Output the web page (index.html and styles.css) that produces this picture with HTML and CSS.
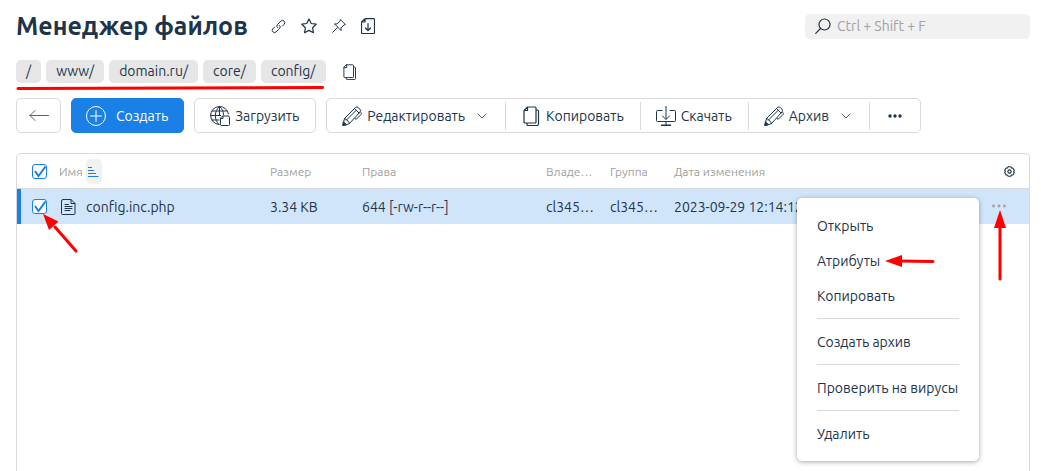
FILE: index.html
```
<!DOCTYPE html>
<html lang="ru">
<head>
<meta charset="utf-8">
<title>Менеджер файлов</title>
<meta name="viewport" content="width=device-width, initial-scale=1">
<link rel="stylesheet" href="styles.css">
</head>
<body>
<svg class="sprite" aria-hidden="true">
  <symbol id="pencil" viewBox="0 0 20 20"><path d="M1 19l1.500-6.500L13.500 1.500q1.500-1.200 3 .2l1.300 1.300q1.500 1.500.2 3L7.500 17.500zM2.500 12.500q1.700 0 2 1.600 1.700.3 1.700 1.600 1.300.3 1.300 1.800M4.500 14L14.500 4M19 6.500q.7 1 0 2l-4.500 4.500q-1.200.8-1.500-.5M12.500 2.500l4.500 4.500"/><path d="M.8 19.200l.6-3.500 2.900 2.900z" fill="currentColor"/></symbol>
  <symbol id="chevron" viewBox="0 0 10 6"><path d="M1 1l4 4 4-4"/></symbol>
  <symbol id="copy" viewBox="0 0 16 20"><path d="M4.500 1H12q1 0 1 1v14q0 1-1 1H2q-1 0-1-1V4.500zM4.500 1v3.500H1M13 4h1.500q1 0 1 1v13q0 1.500-1.500 1.500H5q-1 0-1-1V17"/></symbol>
</svg>

<header class="header">
  <h1 class="title">Менеджер файлов</h1>
  <div class="title-actions">
    <button class="icon-button" aria-label="Скопировать ссылку"><svg class="icon thin" width="15" height="15" viewBox="0 0 15 15"><path d="M6.800 8.800Q4.800 7.200 6.300 5.700L10 2q1.500-1.500 3 0 1.700 1.700.2 3.200L11.500 7M8.200 6.200q2 1.600.5 3.100L5 13q-1.500 1.500-3 0-1.700-1.700-.2-3.200L3.500 8"/></svg></button>
    <button class="icon-button" aria-label="В избранное"><svg class="icon" width="16" height="16" viewBox="0 0 16 16"><path d="M8 1l2.200 4.500 5 .7-3.600 3.500.8 5L8 12.400l-4.400 2.300.8-5L.8 6.200l5-.7z"/></svg></button>
    <button class="icon-button" aria-label="Закрепить"><svg class="icon thin" width="14" height="14" viewBox="0 0 14 14"><path d="M8.500.7l4.800 4.800-1.300.4-3 3 .1 2.600-6.600-6.600 2.600.1 3-3zM5.500 8.500L.7 13.300"/></svg></button>
    <button class="icon-button" aria-label="Скачать"><svg class="icon" width="14" height="16" viewBox="0 0 14 16"><path d="M4 .6h8.500q1 0 1 1v12.900q0 1-1 1h-11q-1 0-1-1V4zM4 .6V4H.5M7 5.500v7M4.500 10L7 12.500 9.500 10"/></svg></button>
  </div>
  <label class="search">
    <svg class="icon" width="16" height="16" viewBox="0 0 16 16"><circle cx="9.500" cy="6.500" r="5.500"/><path d="M5.500 10.500L.7 15.300"/></svg>
    <input class="search-input" type="text" aria-label="Поиск" placeholder="Ctrl + Shift + F">
  </label>
</header>

<nav class="path" aria-label="Путь">
  <div class="crumbs">
    <a class="crumb" href="#">/</a>
    <a class="crumb" href="#">www/</a>
    <a class="crumb" href="#">domain.ru/</a>
    <a class="crumb" href="#">core/</a>
    <a class="crumb" href="#">config/</a>
    <svg class="underline" viewBox="0 0 312 4" preserveAspectRatio="none" aria-hidden="true"><path d="M2 2.500L309 1.500"/></svg>
  </div>
  <button class="icon-button" aria-label="Скопировать путь"><svg class="icon" width="13" height="16"><use href="#copy"/></svg></button>
</nav>

<div class="toolbar">
  <button class="button back" aria-label="Назад"><svg class="icon soft" width="20" height="13" viewBox="0 0 20 13"><path d="M19.500 6.500H.8M6 1.500l-5 5 5 5"/></svg></button>
  <button class="button primary"><svg class="icon thin" width="20" height="20" viewBox="0 0 20 20"><circle cx="10" cy="10" r="9.500"/><path d="M10 4.500v11M4.500 10h11"/></svg>Создать</button>
  <button class="button upload"><svg class="icon thin" width="20" height="20" viewBox="0 0 20 20"><path d="M9 18.500A9 9 0 1 1 18.500 8M9.500.5v9M9 18.500C4 14 4 5 9.500.5 12.500 3 13.500 6 13.500 8.500M.5 9.500h10M2 5h15M2 14h7M13 10h5q1.500 0 1.500 1.500v7q0 1-1 1h-7q-1 0-1-1v-6zM13 10v2.500h-1.500"/></svg>Загрузить</button>
  <div class="group">
    <button class="segment wide"><svg class="icon thin" width="20" height="20"><use href="#pencil"/></svg>Редактировать<svg class="icon soft chevron" width="10" height="6"><use href="#chevron"/></svg></button>
    <button class="segment"><svg class="icon" width="20" height="20"><use href="#copy"/></svg>Копировать</button>
    <button class="segment"><svg class="icon thin" width="20" height="20" viewBox="0 0 20 20"><path d="M6 4.500H1.500q-1 0-1 1v9q0 1 1 1h17q1 0 1-1v-9q0-1-1-1H14M10 0v13M6.500 10l3.500 3.500 3.500-3.500M10 15.500v4"/><path d="M5.500 19.300h9" stroke-width="1.400"/></svg>Скачать</button>
    <button class="segment wide"><svg class="icon thin" width="20" height="20"><use href="#pencil"/></svg>Архив<svg class="icon soft chevron" width="10" height="6"><use href="#chevron"/></svg></button>
    <button class="segment more" aria-label="Ещё"><svg class="dots" width="14" height="4" viewBox="0 0 14 4"><circle cx="2" cy="2" r="1.700"/><circle cx="7" cy="2" r="1.700"/><circle cx="12" cy="2" r="1.700"/></svg></button>
  </div>
</div>

<main class="panel">
  <table class="files">
    <colgroup><col class="col-check"><col class="col-name"><col class="col-size"><col class="col-mode"><col class="col-owner"><col class="col-owner"><col><col class="col-actions"></colgroup>
    <thead>
      <tr>
        <th class="cell-check"><input class="check" type="checkbox" checked aria-label="Выбрать все"></th>
        <th><div class="name">Имя<button class="sort" aria-label="Сортировка по имени"><svg width="11" height="12" viewBox="0 0 11 12"><path d="M0 1.500h4M0 4.500h6M0 7.500h8M0 10.500h10.500"/></svg></button></div></th>
        <th>Размер</th>
        <th>Права</th>
        <th class="clip">Владелец</th>
        <th class="clip">Группа</th>
        <th>Дата изменения</th>
        <th class="cell-gear"><button class="icon-button" aria-label="Настройки таблицы"><svg class="icon" width="11" height="11" viewBox="0 0 12 12"><path d="M4.500.8h3l.7 1.400 1.600.1 1.400 2.700-.8 1 .8 1-1.400 2.700-1.600.1-.7 1.400h-3l-.7-1.400-1.600-.1L.8 7l.8-1-.8-1 1.400-2.700 1.600-.1z"/><circle cx="6" cy="6" r="1.800"/></svg></button></th>
      </tr>
    </thead>
    <tbody>
      <tr class="selected">
        <td class="cell-check"><input class="check" type="checkbox" checked aria-label="Выбрать config.inc.php"><svg class="arrow arrow-check" width="38" height="42" viewBox="0 0 38 42" aria-hidden="true"><path class="shaft" d="M34 38L13 14"/><path class="head" d="M1 1l6 16 9.500-8.500z"/></svg></td>
        <td><div class="name file"><svg class="icon thin" width="15" height="16" viewBox="0 0 15 16"><path d="M2 .5h8l4 4v10q0 1-1 1H1.500q-1 0-1-1V2Q.5.500 2 .5zM10 .5v4h4M4 5.500h3.500M4 7.500h7M4 9.500h7M4 11.500h5"/></svg>config.inc.php</div></td>
        <td>3.34 KB</td>
        <td>644 [-rw-r--r--]</td>
        <td class="clip">cl345678</td>
        <td class="clip">cl345678</td>
        <td>2023-09-29 12:14:12</td>
        <td class="cell-actions">
          <button class="icon-button row-more" aria-label="Действия"><svg class="dots" width="14" height="4" viewBox="0 0 14 4"><circle cx="1.500" cy="2" r="1.400"/><circle cx="7" cy="2" r="1.400"/><circle cx="12.500" cy="2" r="1.400"/></svg></button>
          <svg class="arrow arrow-more" width="12" height="72" viewBox="0 0 12 72" aria-hidden="true"><path class="shaft" d="M6 69V16"/><path class="head" d="M6 0l6 18H0z"/></svg>
          <div class="menu" role="menu">
            <button class="menu-item" role="menuitem">Открыть</button>
            <button class="menu-item" role="menuitem">Атрибуты<svg class="menu-arrow" width="51" height="12" viewBox="0 0 51 12" aria-hidden="true"><path class="shaft" d="M48 6.500L15 6"/><path class="head" d="M0 6L17 0v12z"/></svg></button>
            <button class="menu-item" role="menuitem">Копировать</button>
            <hr class="divider">
            <button class="menu-item" role="menuitem">Создать архив</button>
            <hr class="divider">
            <button class="menu-item" role="menuitem">Проверить на вирусы</button>
            <hr class="divider">
            <button class="menu-item" role="menuitem">Удалить</button>
          </div>
        </td>
      </tr>
    </tbody>
  </table>
</main>
</body>
</html>
```
FILE: styles.css
```
* { box-sizing: border-box; }

body {
  margin: 0;
  padding: 10px 11px 0 16px;
  min-height: 100vh;
  display: flex;
  flex-direction: column;
  background: #fff;
  color: #1d344b;
  font: 14px/20px Ubuntu, "Noto Sans", sans-serif;
}

button, input { font: inherit; color: inherit; }
button { padding: 0; border: 0; background: none; white-space: nowrap; cursor: pointer; }
svg { display: block; flex: none; }
.sprite { position: absolute; width: 0; height: 0; }

.icon { fill: none; stroke: currentColor; stroke-width: 1.2; stroke-linejoin: round; stroke-linecap: round; }
.thin { stroke-width: 1; }
.soft { stroke-width: 1; opacity: .75; }
.dots { fill: currentColor; }
.icon-button { display: flex; align-items: center; justify-content: center; }

.header { display: flex; align-items: center; height: 32px; }
.title { margin: 0; font-size: 25px; line-height: 32px; font-weight: 600; }
.title-actions { display: flex; align-items: center; gap: 15px; margin-left: 23px; }
.search {
  display: flex;
  align-items: center;
  gap: 6px;
  width: 225px;
  height: 25px;
  margin-left: auto;
  padding: 0 10px;
  border-radius: 5px;
  background: #f1f1f1;
}
.search-input { flex: 1; min-width: 0; padding: 0; border: 0; outline: 0; background: none; }
.search-input::placeholder { color: #a1a1a1; opacity: 1; }

.path { display: flex; align-items: center; gap: 17px; margin-top: 18px; }
.crumbs { position: relative; display: flex; gap: 5px; }
.crumb {
  padding: 0 10px;
  border-radius: 5px;
  background: #e6e6e6;
  color: inherit;
  line-height: 23px;
  text-decoration: none;
}
.underline { position: absolute; left: 0; top: 26px; width: 100%; height: 4px; fill: none; stroke: #f00; stroke-width: 3; stroke-linecap: round; }

.toolbar { display: flex; gap: 10px; margin-top: 15px; }
.button, .group { height: 35px; border: 1px solid #d9d9d9; border-radius: 5px; }
.button, .segment { display: flex; align-items: center; justify-content: center; gap: 5px; }
.back { width: 45px; }
.primary { gap: 10px; padding: 0 15px 0 14px; border-color: #1a80e6; background: #1a80e6; color: #fff; }
.upload { padding: 0 16px 0 15px; }
.group { display: flex; align-items: center; }
.segment { height: 28px; padding: 0 16px 0 15px; }
.segment + .segment { border-left: 1px solid #d9d9d9; }
.wide { padding-right: 18px; }
.chevron { margin-left: 7px; }
.group .more { padding: 0 18px; }

.panel { flex: 1; margin-top: 20px; border: 1px solid #d9d9d9; border-bottom: 0; border-radius: 5px 5px 0 0; }
.files { width: 100%; border-collapse: collapse; table-layout: fixed; }
.files th, .files td { height: 36px; padding: 1px 0 0; text-align: left; white-space: nowrap; }
.files th { height: 34px; padding-top: 2px; border-bottom: 1px solid #d9d9d9; color: #a1a1a1; font-size: 12px; font-weight: 400; }
.files .clip { overflow: hidden; padding-right: 16px; text-overflow: ellipsis; }
.col-check { width: 42px; }
.col-name { width: 211px; }
.col-size { width: 92px; }
.col-mode { width: 184px; }
.col-owner { width: 64px; }
.col-actions { width: 55px; }
.selected { background: #d1e5fa; }

.files .cell-check { position: relative; padding-left: 15px; }
.selected .cell-check { box-shadow: inset 4px 0 #1a80e6; }
.check {
  appearance: none;
  display: block;
  width: 15px;
  height: 15px;
  margin: 0;
  border: 1px solid #1a80e6;
  border-radius: 3px;
  background: #fff;
}
.check:checked {
  background: #fff url("data:image/svg+xml,%3Csvg xmlns='http://www.w3.org/2000/svg' viewBox='0 0 13 13'%3E%3Cpath d='M2 6l3.500 5L12.500 1.500' fill='none' stroke='%231a80e6' stroke-width='2'/%3E%3C/svg%3E") center / 13px 13px no-repeat;
}
.name { display: flex; align-items: center; gap: 3px; }
.file { gap: 10px; padding-left: 2px; }
.sort { display: flex; align-items: center; justify-content: center; width: 16px; height: 25px; border-radius: 5px; background: #f1f1f1; }
.sort svg { fill: none; stroke: #1a80e6; }
.cell-gear .icon-button { margin-left: 30px; color: #1d344b; }
.files .cell-actions { position: relative; padding-top: 0; }
.row-more { margin-left: 18px; color: #a1a1a1; }

.menu {
  position: absolute;
  top: 9px;
  right: 50px;
  z-index: 1;
  min-width: 182px;
  padding: 10px 20px;
  border-radius: 5px;
  background: #fff;
  box-shadow: 0 1px 5px rgba(0, 0, 0, .35);
}
.menu-item { display: flex; align-items: center; gap: 5px; width: 100%; height: 35px; padding-top: 2px; }
.divider { margin: 5px 0; border: 0; border-top: 1px solid #d9d9d9; }

.shaft { fill: none; stroke: #f00; stroke-width: 3; stroke-linecap: round; }
.head { fill: #f00; }
.arrow { position: absolute; z-index: 2; }
.arrow-check { left: 25px; top: 24px; }
.arrow-more { left: 20px; top: 21px; }
```
